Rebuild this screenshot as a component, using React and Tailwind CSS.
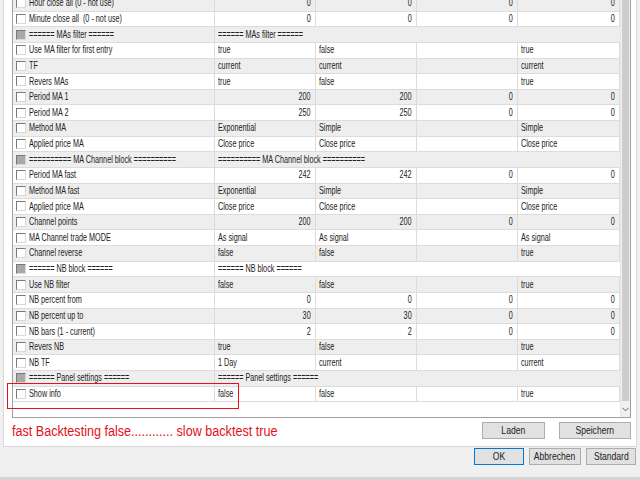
import React from "react";

const rows = [
  { n: "Hour close all (0 - not use)", v: ["0", "0", "0", "0"], num: true },
  { n: "Minute close all  (0 - not use)", v: ["0", "0", "0", "0"], num: true },
  { h: "====== MAs filter ======" },
  { n: "Use MA filter for first entry", v: ["true", "false", "", "true"] },
  { n: "TF", v: ["current", "current", "", "current"] },
  { n: "Revers MAs", v: ["true", "false", "", "true"] },
  { n: "Period MA 1", v: ["200", "200", "0", "0"], num: true },
  { n: "Period MA 2", v: ["250", "250", "0", "0"], num: true },
  { n: "Method MA", v: ["Exponential", "Simple", "", "Simple"] },
  { n: "Applied price MA", v: ["Close price", "Close price", "", "Close price"] },
  { h: "========== MA Channel block ==========" },
  { n: "Period MA fast", v: ["242", "242", "0", "0"], num: true },
  { n: "Method MA fast", v: ["Exponential", "Simple", "", "Simple"] },
  { n: "Applied price MA", v: ["Close price", "Close price", "", "Close price"] },
  { n: "Channel points", v: ["200", "200", "0", "0"], num: true },
  { n: "MA Channel trade MODE", v: ["As signal", "As signal", "", "As signal"] },
  { n: "Channel reverse", v: ["false", "false", "", "true"] },
  { h: "====== NB block ======" },
  { n: "Use NB filter", v: ["false", "false", "", "true"] },
  { n: "NB percent from", v: ["0", "0", "0", "0"], num: true },
  { n: "NB percent up to", v: ["30", "30", "0", "0"], num: true },
  { n: "NB bars (1 - current)", v: ["2", "2", "0", "0"], num: true },
  { n: "Revers NB", v: ["true", "false", "", "true"] },
  { n: "NB TF", v: ["1 Day", "current", "", "current"] },
  { h: "====== Panel settings ======" },
  { n: "Show info", v: ["false", "false", "", "true"] },
];

const widths = ["w-[101px]", "w-[101px]", "w-[101px]", "w-[102px]"];

const Txt = ({ children, right }) => (
  <span
    className={
      "inline-block whitespace-pre scale-x-[0.69] " +
      (right ? "origin-right" : "origin-left")
    }
  >
    {children}
  </span>
);

const Check = ({ head }) => (
  <span
    className={
      "inline-block w-[10px] h-[10px] shrink-0 border-t border-l border-t-[#7a7a7a] border-l-[#7a7a7a] border-b border-r border-b-[#d8d8d8] border-r-[#d8d8d8] " +
      (head ? "bg-[#a9a9a9]" : "bg-white")
    }
  />
);

const Row = ({ r, i }) => {
  const bg = i % 2 === 0 ? "bg-[#eeeeee]" : "bg-white";
  return (
    <div className={"flex h-[15.64px] border-b border-[#dcdcdc] " + bg}>
      <div className="w-[202px] flex items-center gap-[3px] pl-[3px] border-r border-[#dcdcdc]">
        <Check head={!!r.h} />
        <Txt>{r.h || r.n}</Txt>
      </div>
      {r.h ? (
        <div className="w-[405px] flex items-center pl-[3px]">
          <Txt>{r.h}</Txt>
        </div>
      ) : (
        r.v.map((v, k) => (
          <div
            key={k}
            className={
              widths[k] +
              " flex items-center border-r border-[#dcdcdc] " +
              (r.num ? "justify-end pr-[4px]" : "pl-[3px]")
            }
          >
            <Txt right={r.num}>{v}</Txt>
          </div>
        ))
      )}
    </div>
  );
};

const Btn = ({ children, w, ok }) => (
  <div
    className={
      "h-[17px] flex items-center justify-center bg-[#e1e1e1] border " +
      w +
      (ok ? " border-[#0078d7]" : " border-[#adadad]")
    }
  >
    <span className="inline-block scale-x-[0.78]">{children}</span>
  </div>
);

export default function App() {
  return (
    <div
      className="relative w-[640px] h-[480px] bg-[#f0f0f0] overflow-hidden flex flex-col text-[10.5px] text-[#222]"
      style={{ fontFamily: "'Liberation Sans', Arial, sans-serif" }}
    >
      <div className="mx-[3px] h-[447px] bg-white border-l border-r border-b border-[#d9d9d9] pl-[8px] pr-[5px] flex flex-col">
        <div className="h-[418px] w-[619px] flex border-l border-r border-b border-[#a0a0a0] overflow-hidden">
          <div className="w-[607px] mt-[-4px]">
            {rows.map((r, i) => (
              <Row key={i} r={r} i={i} />
            ))}
          </div>
          <div className="w-[11px] flex flex-col bg-[#f0f0f0] border-l border-[#e6e6e6]">
            <div className="h-[401px] mx-[1px] bg-[#cdcdcd]" />
            <div className="flex-1 flex items-center justify-center">
              <svg width="7" height="5" viewBox="0 0 7 5">
                <path d="M0.5 0.8 L3.5 3.8 L6.5 0.8" stroke="#606060" strokeWidth="1" fill="none" />
              </svg>
            </div>
          </div>
        </div>
        <div className="flex-1 flex items-center justify-between">
          <span className="inline-block origin-left scale-x-[0.9] text-[14px] text-[#e2101a] whitespace-pre pb-[2px]">
            fast Backtesting false............ slow backtest true
          </span>
          <div className="flex gap-[14px] text-[11px] pb-[3px]">
            <Btn w="w-[63px]">Laden</Btn>
            <Btn w="w-[72px]">Speichern</Btn>
          </div>
        </div>
      </div>
      <div className="flex justify-end gap-[5px] pr-[4px] pt-[1px] text-[11px]">
        <Btn w="w-[50px]" ok>
          OK
        </Btn>
        <Btn w="w-[52px]">Abbrechen</Btn>
        <Btn w="w-[50px]">Standard</Btn>
      </div>
      <div className="mt-auto h-[3px] bg-[#d4d4d4]" />
      <div className="absolute left-[7px] top-[383px] w-[232px] h-[26px] border-[1.5px] border-[#e8101c] pointer-events-none" />
    </div>
  );
}
